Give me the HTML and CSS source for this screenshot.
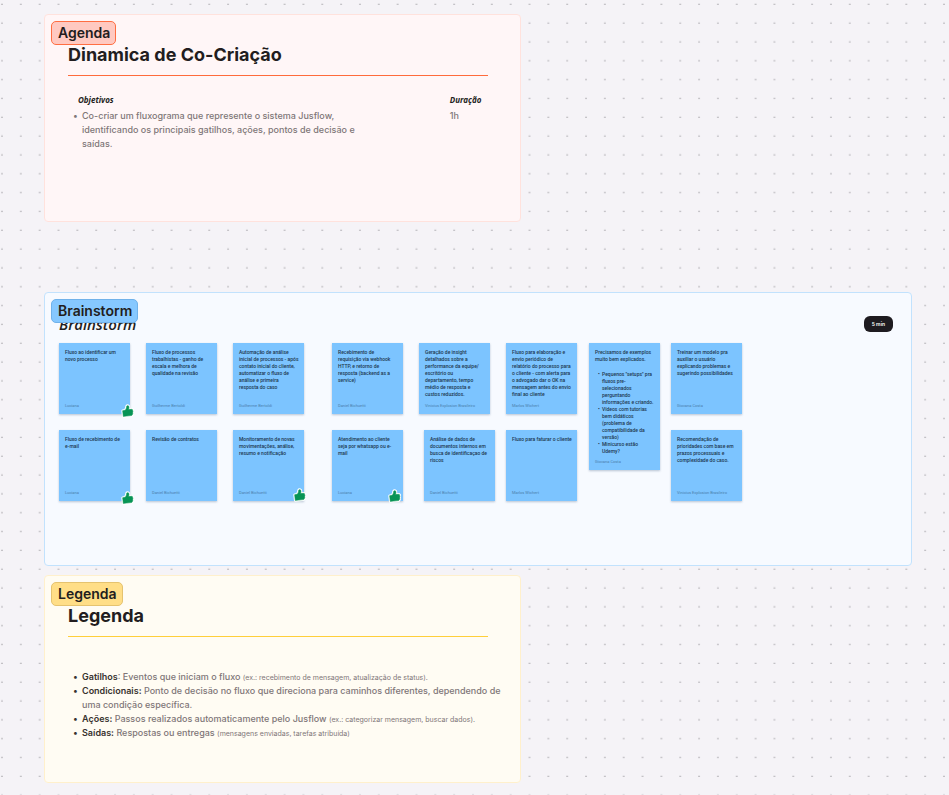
FILE: index.html
```html
<!DOCTYPE html>
<html lang="pt-BR">
<head>
  <meta charset="UTF-8">
  <meta name="viewport" content="width=device-width, initial-scale=1.0">
  <title>Dinamica de Co-Criação</title>
  <link rel="stylesheet" href="styles.css">
</head>
<body>
  <svg class="dots" aria-hidden="true">
    <defs>
      <pattern id="dot" width="18.84" height="18.83" patternUnits="userSpaceOnUse">
        <rect x="1.4" y="3.7" width="1.2" height="1.2" fill="#9c9a9f"/>
      </pattern>
      <symbol id="thumb" viewBox="0 0 24 26">
        <path d="M3 12.5l4.500-.8c2-2 2.600-4.200 2.900-7.200.2-2.300 4.300-1.900 4.300 1.200 0 2-.4 3.300-.8 4.700l5.600-.5c2 0 2.500 1.600 1.900 2.800.9.900.9 2.200.1 3 .7 1 .5 2.200-.4 2.900.3 1.600-.7 2.700-2.300 2.900l-9.300 1-5.300.5z" fill="#fff" stroke="#fff" stroke-width="5" stroke-linejoin="round"/>
        <path d="M3 12.500l4.500-.8c2-2 2.600-4.200 2.900-7.200.2-2.300 4.300-1.900 4.300 1.200 0 2-.4 3.300-.8 4.700l5.600-.5c2 0 2.500 1.600 1.900 2.800.9.900.9 2.200.1 3 .7 1 .5 2.200-.4 2.900.3 1.600-.7 2.700-2.300 2.900l-9.300 1-5.300.5z" fill="#079455" stroke="#079455" stroke-linejoin="round"/>
      </symbol>
    </defs>
    <rect width="100%" height="100%" fill="url(#dot)"/>
  </svg>

  <main class="board">
    <section class="frame agenda">
      <span class="tag">Agenda</span>
      <h1 class="frame-title">Dinamica de Co-Criação</h1>
      <div class="agenda-body">
        <div class="goals">
          <h2 class="hand">Objetivos</h2>
          <ul class="list">
            <li>Co-criar um fluxograma que represente o sistema Jusflow, identificando os principais gatilhos, ações, pontos de decisão e saídas.</li>
          </ul>
        </div>
        <div class="duration">
          <h2 class="hand">Duração</h2>
          <p>1h</p>
        </div>
      </div>
    </section>

    <section class="frame brainstorm">
      <span class="tag">Brainstorm</span>
      <header class="brainstorm-head">
        <h1 class="hand-title">Brainstorm</h1>
        <span class="timer">5 min</span>
      </header>
      <div class="notes">
        <article class="note">
          <p>Fluxo ao identificar um<br>novo processo</p>
          <footer>Luciana</footer>
          <svg class="thumb"><use href="#thumb"/></svg>
        </article>
        <article class="note">
          <p>Fluxo de processos<br>trabalhistas - ganho de<br>escala e melhora de<br>qualidade na revisão</p>
          <footer>Guilherme Bertoldi</footer>
        </article>
        <article class="note">
          <p>Automação de análise<br>inicial de processos - após<br>contato inicial do cliente,<br>automatizar o fluxo de<br>análise e primeira<br>resposta do caso</p>
          <footer>Guilherme Bertoldi</footer>
        </article>
        <article class="note">
          <p>Recebimento de<br>requisição via webhook<br>HTTP, e retorno de<br>resposta (backend as a<br>service)</p>
          <footer>Daniel Bichuetti</footer>
        </article>
        <article class="note">
          <p>Geração de insight<br>detalhados sobre a<br>performance da equipe/<br>escritório ou<br>departamento, tempo<br>médio de resposta e<br>custos reduzidos.</p>
          <footer>Vinicius Explosion Brasileiro</footer>
        </article>
        <article class="note">
          <p>Fluxo para elaboração e<br>envio periódico de<br>relatório do processo para<br>o cliente - com alerta para<br>o advogado dar o OK na<br>mensagem antes do envio<br>final ao cliente</p>
          <footer>Marlos Wichert</footer>
        </article>
        <article class="note tall">
          <p>Precisamos de exemplos<br>muito bem explicados.</p>
          <ul>
            <li>Pequenos "setups" pra<br>fluxos pre-<br>selecionados<br>perguntando<br>informações e criando.</li>
            <li>Vídeos com tutorias<br>bem didáticos<br>(problema de<br>compatibilidade da<br>versão)</li>
            <li>Minicurso estão<br>Udemy?</li>
          </ul>
          <footer>Giovana Costa</footer>
        </article>
        <article class="note">
          <p>Treinar um modelo pra<br>auxiliar o usuário<br>explicando problemas e<br>sugerindo possibilidades</p>
          <footer>Giovana Costa</footer>
        </article>

        <article class="note">
          <p>Fluxo de recebimento de<br>e-mail</p>
          <footer>Luciana</footer>
          <svg class="thumb"><use href="#thumb"/></svg>
        </article>
        <article class="note">
          <p>Revisão de contratos</p>
          <footer>Daniel Bichuetti</footer>
        </article>
        <article class="note">
          <p>Monitoramento de novas<br>movimentações, análise,<br>resumo e notificação</p>
          <footer>Daniel Bichuetti</footer>
          <svg class="thumb raised"><use href="#thumb"/></svg>
        </article>
        <article class="note">
          <p>Atendimento ao cliente<br>seja por whatsapp ou e-<br>mail</p>
          <footer>Luciana</footer>
          <svg class="thumb inner"><use href="#thumb"/></svg>
        </article>
        <article class="note shifted">
          <p>Análise de dados de<br>documentos internos em<br>busca de identificaçao de<br>riscos</p>
          <footer>Daniel Bichuetti</footer>
        </article>
        <article class="note">
          <p>Fluxo para faturar o cliente</p>
          <footer>Marlos Wichert</footer>
        </article>
        <article class="note">
          <p>Recomendação de<br>prioridades com base em<br>prazos processuais e<br>complexidade do caso.</p>
          <footer>Vinicius Explosion Brasileiro</footer>
        </article>
      </div>
    </section>

    <section class="frame legend">
      <span class="tag">Legenda</span>
      <h1 class="frame-title">Legenda</h1>
      <ul class="list">
        <li><b>Gatilhos</b>: Eventos que iniciam o fluxo <small>(ex.: recebimento de mensagem, atualização de status).</small></li>
        <li><b>Condicionais:</b> Ponto de decisão no fluxo que direciona para caminhos diferentes, dependendo de uma condição específica.</li>
        <li><b>Ações:</b> Passos realizados automaticamente pelo Jusflow <small>(ex.: categorizar mensagem, buscar dados).</small></li>
        <li><b>Saídas:</b> Respostas ou entregas <small>(mensagens enviadas, tarefas atribuída)</small></li>
      </ul>
    </section>
  </main>
</body>
</html>
```
FILE: styles.css
```css
* {
  box-sizing: border-box;
}

body {
  margin: 0;
  background-color: #f5f3f7;
  color: #221d20;
  font-family: Inter, "Liberation Sans", sans-serif;
}

h1,
h2,
p,
ul {
  margin: 0;
}

.dots {
  position: fixed;
  inset: 0;
  z-index: -1;
  width: 100%;
  height: 100%;
}

.board {
  display: flex;
  flex-direction: column;
  padding: 14px 37px 12px 44px;
}

/* frames */

.frame {
  position: relative;
  border: 1px solid;
  border-radius: 4px;
}

.agenda,
.legend {
  width: 55%;
  min-height: 208px;
  padding: 28px 8px 20px 23px;
}

.agenda {
  margin-bottom: 70px;
  background-color: #fff6f7;
  border-color: #ffe2dd;
}

.brainstorm {
  min-height: 274px;
  margin-bottom: 9px;
  padding: 21px 18px 20px 14px;
  background-color: #f7faff;
  border-color: #c2e2fd;
}

.legend {
  background-color: #fffcf3;
  border-color: #fff0cc;
}

.tag {
  position: absolute;
  top: 6px;
  left: 6px;
  padding: 0 5px 0 6px;
  border: 1px solid;
  border-radius: 5px;
  font-size: 14px;
  font-weight: 600;
  line-height: 22px;
}

.agenda .tag {
  background-color: #ffc9c1;
  border-color: #ff6e42;
}

.brainstorm .tag {
  background-color: #86c8ff;
  border-color: #70b2ea;
}

.legend .tag {
  background-color: #ffde87;
  border-color: #e5c36f;
}

.frame-title {
  margin-right: 24px;
  padding-bottom: 8px;
  border-bottom: 1px solid #ff6b3c;
  font-size: 18px;
  font-weight: 700;
  line-height: 24px;
}

.legend .frame-title {
  border-color: #ffcf3a;
}

/* agenda and legend text */

.list,
.duration p {
  color: #807678;
  font-size: 9px;
  font-weight: 500;
  line-height: 14px;
}

.list {
  padding-left: 14px;
}

li {
  list-style: none;
}

li::before {
  content: "•";
  display: inline-block;
  width: 9px;
  margin-left: -9px;
}

.agenda-body {
  display: flex;
  justify-content: space-between;
  margin-right: 31px;
  padding-top: 17px;
}

.goals {
  width: 71%;
}

.hand {
  margin-bottom: 2px;
  font-family: "Open Sans", sans-serif;
  font-size: 8px;
  font-style: italic;
  font-weight: 700;
  line-height: 14px;
}

.goals .hand {
  padding-left: 10px;
}

.legend .list {
  padding-top: 33px;
}

.legend li::before,
.legend b {
  color: #38332f;
}

.legend b {
  font-weight: 600;
}

.legend small {
  font-size: 7px;
  font-weight: 400;
  line-height: 7px;
}

/* brainstorm */

.brainstorm-head {
  display: flex;
  align-items: center;
  justify-content: space-between;
  height: 20px;
}

.hand-title {
  font-family: "Open Sans", sans-serif;
  font-size: 15px;
  font-style: italic;
  font-weight: 600;
  line-height: 20px;
}

.timer {
  padding: 0 8px;
  border-radius: 6px;
  background-color: #1e1b20;
  color: #fff;
  font-size: 5px;
  font-weight: 600;
  line-height: 16px;
}

.notes {
  display: grid;
  grid-template-columns: 76px 76px 88px 76px 76px 72px 71px 71px;
  grid-template-rows: 71px 71px;
  gap: 16px 11px;
  padding-top: 9px;
}

.note {
  position: relative;
  display: flex;
  flex-direction: column;
  justify-content: space-between;
  width: 71px;
  padding: 6px;
  background-color: #7cc4ff;
  box-shadow: 0 1px 2px rgba(40, 70, 110, 0.3);
  color: #1d3850;
  font-family: Roboto, "Liberation Sans", sans-serif;
  font-size: 5px;
  font-weight: 500;
  line-height: 7px;
  white-space: nowrap;
}

.note footer {
  color: #4b80ad;
  font-size: 4px;
  font-weight: 400;
  line-height: 5px;
}

.note ul {
  padding-top: 3px;
  padding-left: 7px;
}

.note li::before {
  width: 4px;
  margin-left: -4px;
}

.tall {
  grid-row: span 2;
  height: 127px;
}

.shifted {
  justify-self: end;
}

.thumb {
  position: absolute;
  right: -4px;
  bottom: -4px;
  width: 13px;
  height: 14px;
}

.thumb.raised {
  right: -2px;
  bottom: -1px;
}

.thumb.inner {
  right: 2px;
  bottom: -2px;
}
```
